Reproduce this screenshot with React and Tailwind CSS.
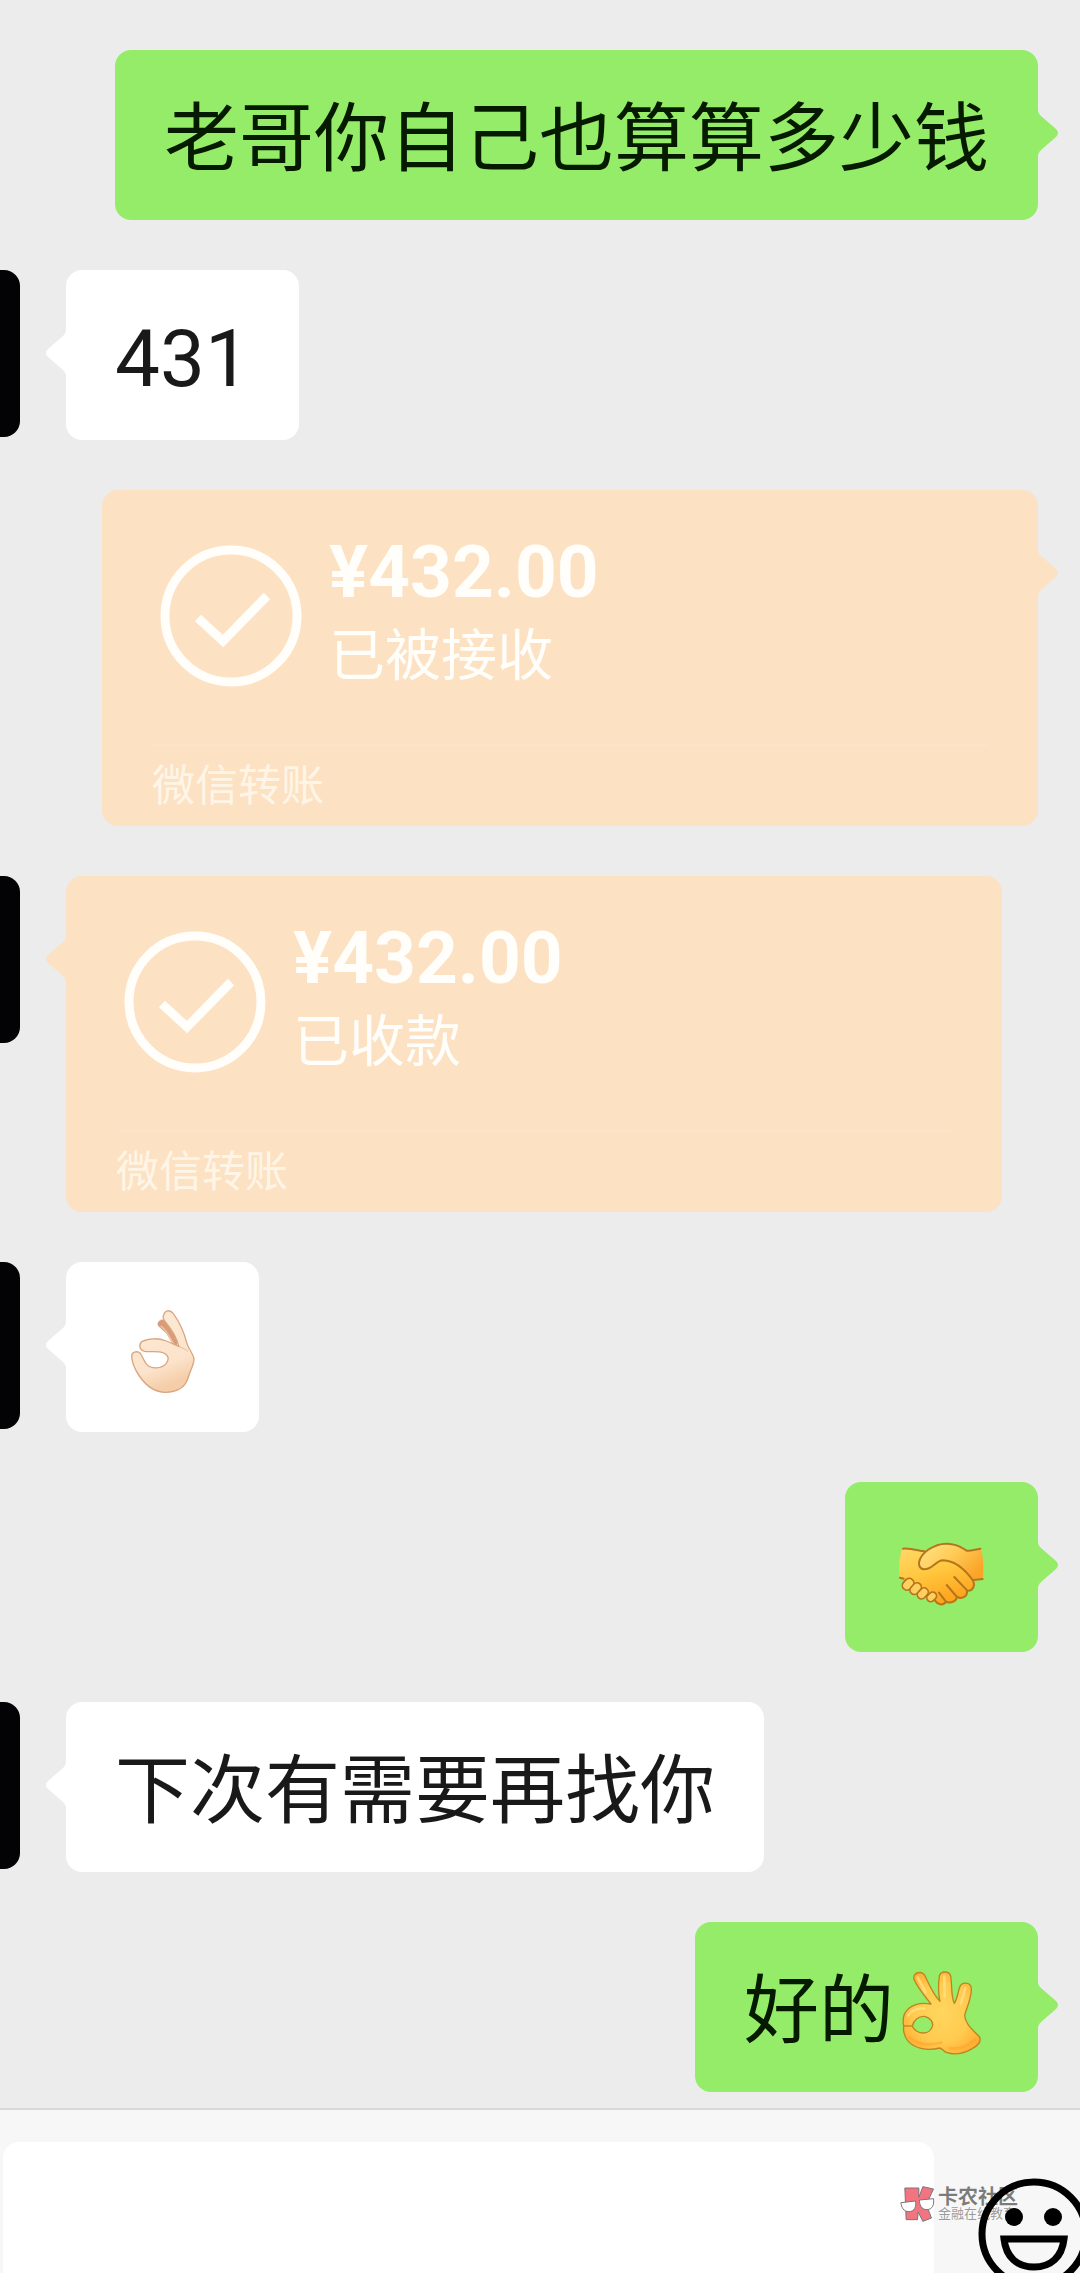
import React, { useState } from "react";

const messages = [
  { id: 1, side: "right", type: "text", text: "老哥你自己也算算多少钱" },
  { id: 2, side: "left", type: "number", text: "431" },
  { id: 3, side: "right", type: "transfer", amount: "¥432.00", status: "已被接收" },
  { id: 4, side: "left", type: "transfer", amount: "¥432.00", status: "已收款" },
  { id: 5, side: "left", type: "text", emoji: "pinch" },
  { id: 6, side: "right", type: "text", emoji: "handshake" },
  { id: 7, side: "left", type: "text", text: "下次有需要再找你" },
  { id: 8, side: "right", type: "text", text: "好的", emoji: "ok" },
];

const PinchEmoji = () => (
  <svg
    role="img"
    aria-label="OK"
    viewBox="225 177 285 288"
    className="w-[95px] h-[96px] shrink-0"
  >
    <defs>
      <linearGradient id="pinchSkin" x1="0" y1="0" x2="0.3" y2="1">
        <stop offset="0" stopColor="#fdebd6" />
        <stop offset="0.75" stopColor="#fce3cb" />
        <stop offset="1" stopColor="#f5cda9" />
      </linearGradient>
    </defs>
    {/* fingers behind */}
    <path
      d="M356 246C360 238 370 238 376 244L412 296L410 322C398 316 394 302 384 286C376 274 362 266 356 258C353 254 353 250 356 246Z"
      fill="#d99b78"
      stroke="#cf9877"
      strokeWidth="2"
    />
    <path d="M362 258C378 268 390 292 402 316" fill="none" stroke="#eec0a0" strokeWidth="5" />
    <path
      d="M371 224C376 209 391 209 400 221C418 246 432 276 440 308C444 324 458 338 462 356C462 374 452 388 446 408C438 442 410 457 376 457C340 457 316 434 298 408C284 388 275 366 275 346C278 334 293 332 301 340C308 350 311 362 320 373C334 388 364 387 379 370C388 358 387 347 371 339C352 331 332 337 314 334C297 330 295 313 307 304C325 294 356 294 379 303C394 309 406 315 417 320C410 292 392 264 375 244C369 237 368 231 371 224Z"
      fill="url(#pinchSkin)"
      stroke="#d9a680"
      strokeWidth="4"
      strokeLinejoin="round"
    />
    <path d="M417 320C428 324 438 328 444 334" fill="none" stroke="#e6bd9c" strokeWidth="3" />
  </svg>
);

const HandshakeEmoji = () => (
  <svg
    role="img"
    aria-label="握手"
    viewBox="225 177 285 288"
    className="w-[95px] h-[96px] shrink-0"
  >
    <defs>
      <linearGradient id="shakeSkin" x1="0" y1="0" x2="0.4" y2="1">
        <stop offset="0" stopColor="#ffd866" />
        <stop offset="0.5" stopColor="#ffc840" />
        <stop offset="1" stopColor="#ffa51e" />
      </linearGradient>
      <linearGradient id="shakeArm" x1="0" y1="0" x2="1" y2="0.6">
        <stop offset="0" stopColor="#ffe48c" />
        <stop offset="0.5" stopColor="#ffcd58" />
        <stop offset="1" stopColor="#fba42a" />
      </linearGradient>
    </defs>
    <path
      d="M250 266C276 265 296 274 318 276L400 290L465 364C468 382 460 394 445 394C446 410 432 420 416 414C410 430 394 434 382 428C368 438 352 434 346 420L254 356L243 356C238 326 240 292 250 266Z"
      fill="url(#shakeSkin)"
    />
    <path
      d="M302 306C306 284 330 258 358 252C386 246 410 252 424 264C436 274 460 272 486 265C494 292 494 328 492 357L464 361C444 334 412 304 372 300C350 308 338 330 314 328C302 326 299 318 302 306Z"
      fill="url(#shakeArm)"
    />
    <g fill="none" stroke="#b5751c" strokeWidth="6" strokeLinecap="round" strokeLinejoin="round">
      <path d="M252 266C276 264 298 272 316 274" />
      <path d="M484 266C468 268 456 274 444 272C430 268 426 252 384 251C344 250 304 280 300 308C299 320 306 328 316 328C340 328 350 302 372 301C410 302 442 334 462 362C470 380 458 396 444 391L406 351" />
      <path d="M444 392C446 410 430 418 414 411L383 375" />
      <path d="M414 412C408 428 392 430 380 424L360 398" />
      <path d="M382 426C370 438 356 434 348 422" />
      <path d="M243 353L254 356" />
      <path d="M464 360L491 357" />
    </g>
    <g fill="#ffd060" stroke="#b5751c" strokeWidth="5">
      <rect x="254" y="354" width="28" height="38" rx="14" transform="rotate(42 268 372)" />
      <rect x="277" y="367" width="26" height="38" rx="13" transform="rotate(42 290 386)" />
      <rect x="299" y="382" width="25" height="36" rx="12" transform="rotate(44 311 400)" />
      <rect x="327" y="395" width="23" height="31" rx="11" transform="rotate(46 338 410)" />
    </g>
  </svg>
);

const OkEmoji = () => (
  <svg
    role="img"
    aria-label="OK"
    viewBox="105 57 285 288"
    className="w-[95px] h-[96px] shrink-0"
  >
    <defs>
      <radialGradient id="okSkin" cx="0.5" cy="0.5" r="0.6">
        <stop offset="0" stopColor="#ffd65e" />
        <stop offset="0.6" stopColor="#ffcb50" />
        <stop offset="1" stopColor="#ffac30" />
      </radialGradient>
    </defs>
    <path
      fillRule="evenodd"
      d="M165 118C160 96 190 90 199 110C212 138 226 168 243 184C237 160 238 132 241 108C245 92 270 92 275 108C280 136 275 168 286 190C295 176 297 156 302 142C308 124 334 126 337 144C339 170 324 200 317 226C318 252 342 270 361 290C369 304 356 318 336 328C312 341 284 345 262 337C254 334 250 326 242 324C206 334 168 326 148 304C136 290 132 274 134 258C130 238 134 218 150 205C166 192 192 188 216 192C200 172 176 144 165 118ZM160 258C164 240 180 228 196 229C212 232 222 244 221 256C218 270 206 279 192 279C178 279 164 270 160 258Z"
      fill="url(#okSkin)"
      stroke="#bf8420"
      strokeWidth="4"
      strokeLinejoin="round"
    />
    <path d="M134 258L160 258" stroke="#bf8420" strokeWidth="4" />
    <path
      d="M148 226C158 210 176 204 196 206M176 112L200 158M256 108L257 170M319 144L306 190"
      fill="none"
      stroke="#ffe28c"
      strokeWidth="8"
      strokeLinecap="round"
      opacity="0.7"
    />
    <path
      d="M152 292C180 318 216 316 246 308M272 324C300 330 330 318 348 298"
      fill="none"
      stroke="#ff9f2e"
      strokeWidth="9"
      strokeLinecap="round"
      opacity="0.5"
    />
  </svg>
);

const emojis = {
  pinch: PinchEmoji,
  handshake: HandshakeEmoji,
  ok: OkEmoji,
};

// Small arrow that points from the bubble to its avatar
const Tail = ({ side }) => (
  <svg
    viewBox="0 0 21 46"
    className={`absolute top-[60px] w-[21px] h-[46px] fill-current ${
      side === "right" ? "left-full" : "right-full -scale-x-100"
    }`}
    aria-hidden="true"
  >
    <path d="M0 0C0 2 1 4 3 6L18 19Q22 23 18 27L3 40C1 42 0 44 0 46Z" />
  </svg>
);

const Bubble = ({ side, text, emoji, isNumber }) => {
  const Emoji = emojis[emoji];
  return (
    <div
      className={`relative flex items-center min-h-[170px] px-[49px] rounded-[16px] ${
        side === "right" ? "bg-[#95ec69] text-[#95ec69]" : "bg-white text-white"
      }`}
    >
      <Tail side={side} />
      {text && (
        <p
          className={
            isNumber
              ? "pt-[8px] text-[80px] leading-[96px] text-[#191919]"
              : side === "right"
              ? "pt-[8px] text-[75px] leading-[96px] text-[#061a00]"
              : "pt-[8px] text-[75px] leading-[96px] text-[#191919]"
          }
        >
          {text}
        </p>
      )}
      {Emoji && <Emoji />}
    </div>
  );
};

const TransferCard = ({ side, amount, status }) => (
  <div className="relative w-[936px] max-w-full rounded-[16px] bg-[#fce1c3] text-[#fce1c3] px-[50px] pb-[10px]">
    <Tail side={side} />
    <div className="flex items-start gap-[27px] pl-[8px] h-[254px]">
      <svg
        viewBox="0 0 142 142"
        className="w-[142px] h-[142px] mt-[55px] shrink-0"
        fill="none"
        stroke="#fffefa"
        aria-hidden="true"
      >
        <circle cx="71" cy="71" r="66" strokeWidth="9" />
        <path d="M38 73L63 96L107 51" strokeWidth="9" />
      </svg>
      <div className="pt-[42px] text-[#fffefa]">
        <p className="font-bold text-[73px] leading-[80px]">{amount}</p>
        <p className="pt-[4px] text-[56px] leading-[80px]">{status}</p>
      </div>
    </div>
    <div className="border-t-2 border-[#fde4c8] pt-[10px]">
      <p className="text-[43px] leading-[60px] text-[#fff5e6]">微信转账</p>
    </div>
  </div>
);

const MessageRow = ({ message }) => {
  const { side, type, text, emoji, amount, status } = message;
  return (
    <li
      className={`flex items-start ${
        side === "right" ? "justify-end pr-[42px]" : "gap-[46px]"
      }`}
    >
      {side === "left" && (
        <div className="size-[167px] -ml-[147px] shrink-0 rounded-[16px] bg-[#030305]" />
      )}
      {type === "transfer" ? (
        <TransferCard side={side} amount={amount} status={status} />
      ) : (
        <Bubble side={side} text={text} emoji={emoji} isNumber={type === "number"} />
      )}
    </li>
  );
};

const Watermark = () => (
  <div className="absolute right-[62px] top-[76px] flex items-start gap-[3px] pointer-events-none">
    <svg viewBox="240 316 104 108" className="w-[35px] h-[36px]" aria-hidden="true">
      <path
        d="M254 322H296V350L308 318L340 325L318 372L334 412L308 422L294 394L292 417H258Z"
        fill="#f27480"
        stroke="#7a7476"
        strokeWidth="3"
      />
      <path
        d="M242 366L286 361C290 378 282 393 266 393C250 393 244 380 242 366ZM298 358L340 354C342 372 338 386 320 387C304 387 297 372 298 358Z"
        fill="#ffffff"
        stroke="#7a7476"
        strokeWidth="3"
      />
    </svg>
    <div>
      <p className="text-[20px] leading-[22px] font-bold text-black/50">卡农社区</p>
      <p className="text-[13px] leading-[12px] text-black/40">金融在线教育</p>
    </div>
  </div>
);

const InputBar = () => {
  const [draft, setDraft] = useState("");

  return (
    <footer className="relative flex items-start gap-[44px] h-[165px] shrink-0 overflow-hidden border-t-2 border-[#d8d8d8] bg-[#f7f7f7] pt-[32px] pl-[3px]">
      <textarea
        aria-label="消息"
        value={draft}
        onChange={(e) => setDraft(e.target.value)}
        className="flex-1 min-w-0 h-[131px] resize-none rounded-t-[16px] bg-white px-[24px] py-[16px] text-[55px] outline-none"
      />
      <button type="button" aria-label="表情" className="mt-[36px] -mr-[10px] shrink-0">
        <svg viewBox="0 0 112 112" className="size-[112px]" aria-hidden="true">
          <circle cx="56" cy="56" r="52" fill="none" stroke="#000" strokeWidth="7" />
          <circle cx="36" cy="39" r="9" />
          <circle cx="75" cy="39" r="9" />
          <path
            d="M26 61H86C84 79 73 89 56 89C39 89 28 79 26 61Z"
            fill="none"
            stroke="#000"
            strokeWidth="7"
          />
        </svg>
      </button>
      <Watermark />
    </footer>
  );
};

const App = () => {
  return (
    <div className="flex flex-col min-h-screen overflow-hidden bg-[#ececec] font-['Roboto','Noto_Sans_CJK_SC',sans-serif]">
      <ul className="flex-1 flex flex-col gap-[50px] pt-[50px] pb-[16px]">
        {messages.map((message) => (
          <MessageRow key={message.id} message={message} />
        ))}
      </ul>
      <InputBar />
    </div>
  );
};

export default App;
